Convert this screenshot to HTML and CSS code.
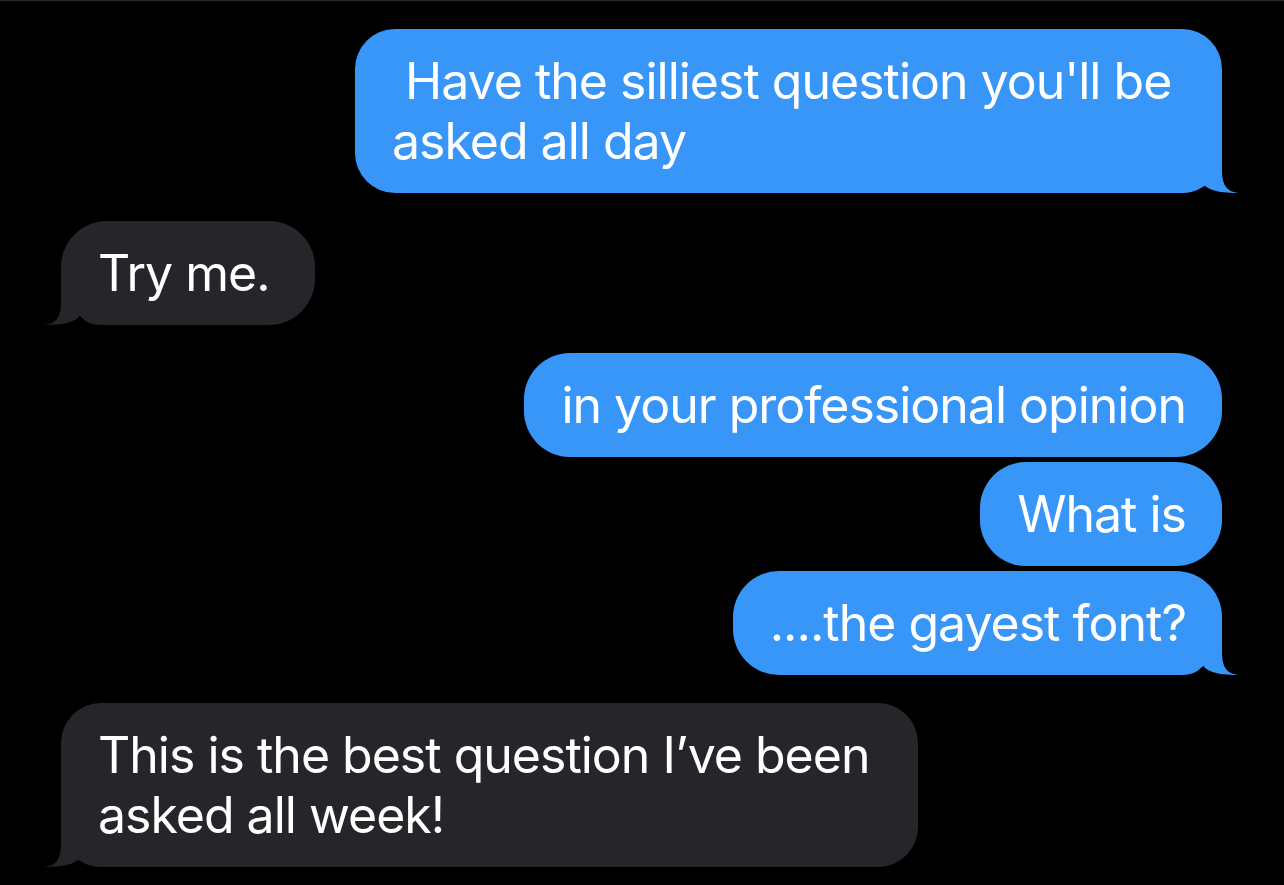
FILE: index.html
```html
<!DOCTYPE html>
<html lang="en">
<head>
<meta charset="utf-8">
<title>Messages</title>
<link rel="stylesheet" href="styles.css">
</head>
<body>
<main class="thread">
  <section class="group group-sent">
    <div class="bubble sent has-tail bubble-wide-sent">
      <p class="text">&nbsp;Have the silliest question you'll be asked all day</p>
      <svg class="tail" width="60" height="50" viewBox="0 0 60 50" aria-hidden="true"><path d="M0 50 L4 50 C14 50 22 46 25 40 C28 46 38 50 60 50 C48 48 44 42 44 26 L44 0 L0 0 Z"/></svg>
    </div>
  </section>
  <section class="group group-received">
    <div class="bubble received has-tail bubble-short-received">
      <p class="text">Try me.</p>
      <svg class="tail" width="60" height="50" viewBox="0 0 60 50" aria-hidden="true"><path d="M0 50 L4 50 C14 50 22 46 25 40 C28 46 38 50 60 50 C48 48 44 42 44 26 L44 0 L0 0 Z"/></svg>
    </div>
  </section>
  <section class="group group-sent">
    <div class="bubble sent">
      <p class="text">in your professional opinion</p>
    </div>
    <div class="bubble sent">
      <p class="text">What is</p>
    </div>
    <div class="bubble sent has-tail">
      <p class="text">....the gayest font?</p>
      <svg class="tail" width="60" height="50" viewBox="0 0 60 50" aria-hidden="true"><path d="M0 50 L4 50 C14 50 22 46 25 40 C28 46 38 50 60 50 C48 48 44 42 44 26 L44 0 L0 0 Z"/></svg>
    </div>
  </section>
  <section class="group group-received">
    <div class="bubble received has-tail bubble-wide-received">
      <p class="text">This is the best question I’ve been asked all week!</p>
      <svg class="tail" width="60" height="50" viewBox="0 0 60 50" aria-hidden="true"><path d="M0 50 L4 50 C14 50 22 46 25 40 C28 46 38 50 60 50 C48 48 44 42 44 26 L44 0 L0 0 Z"/></svg>
    </div>
  </section>
</main>
</body>
</html>
```

FILE: styles.css
```css
html, body {
  margin: 0;
  padding: 0;
  background: #000;
}

body {
  border-top: 1px solid #2a2a2c;
  min-height: 884px;
  font-family: "Inter", "Noto Sans", "Liberation Sans", sans-serif;
  color: #fff;
}

.thread {
  display: flex;
  flex-direction: column;
  gap: 28px;
  padding: 28px 62px 20px 61px;
}

.group {
  display: flex;
  flex-direction: column;
  gap: 5px;
}

.group-sent {
  align-items: flex-end;
}

.group-received {
  align-items: flex-start;
}

.bubble {
  position: relative;
  box-sizing: border-box;
  padding: 22px 36px 22px 37px;
  border-radius: 46px;
}

.bubble.sent {
  background: #3896f8;
}

.bubble.received {
  background: #26262a;
}

.text {
  position: relative;
  z-index: 1;
  margin: 0;
  font-size: 50px;
  line-height: 60px;
  font-weight: 400;
  letter-spacing: -1px;
}

.tail {
  position: absolute;
  bottom: 0;
  display: block;
  z-index: 0;
}

.sent .tail {
  right: -16px;
  fill: #3896f8;
}

.received .tail {
  left: -16px;
  fill: #26262a;
  transform: scaleX(-1);
}

.bubble-wide-sent {
  width: 867px;
  border-radius: 40px;
}

.bubble-wide-received {
  width: 857px;
  border-radius: 40px;
}

.bubble-short-received {
  width: 254px;
}
```
